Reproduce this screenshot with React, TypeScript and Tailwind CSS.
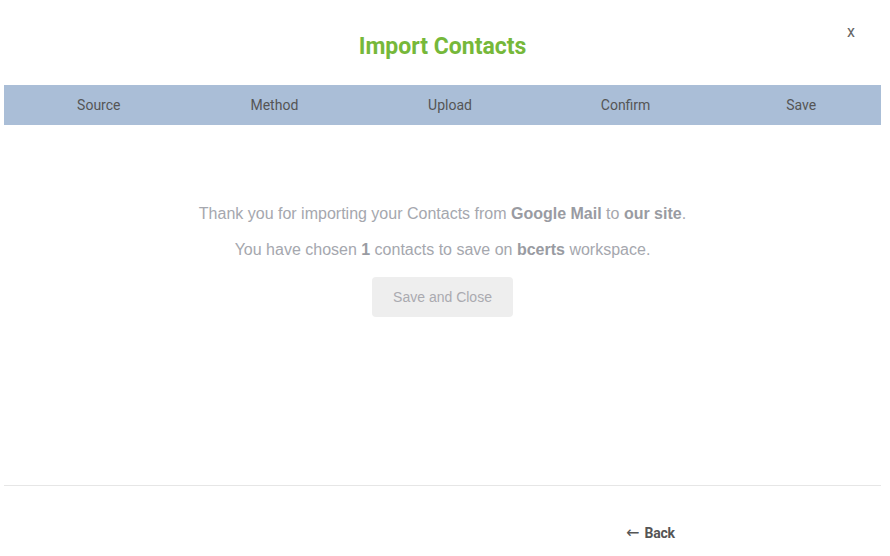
export default function App() {
  return (
    <div className="w-[890px] h-[556px] bg-white overflow-hidden relative">
      {/* Header */}
      <div className="relative ml-[4px] w-[877px] h-[85px] flex items-start justify-center">
        <h1 className="mt-[32px] text-[23px] leading-[30px] font-bold text-[#76b83a] font-['Roboto',sans-serif]">
          Import Contacts
        </h1>
        <button className="absolute right-[26px] top-[22px] text-[16px] leading-5 text-[#666] font-['Roboto',sans-serif]">
          x
        </button>
      </div>

      {/* Steps */}
      <div className="ml-[4px] w-[877px] h-[40px] bg-[#aabed7]">
        <div className="ml-[7px] w-[878px] h-full grid grid-cols-5 items-center text-[14px] text-[#555] font-['Roboto',sans-serif]">
          <div className="text-center">Source</div>
          <div className="text-center">Method</div>
          <div className="text-center">Upload</div>
          <div className="text-center">Confirm</div>
          <div className="text-center">Save</div>
        </div>
      </div>

      {/* Body */}
      <div className="ml-[4px] w-[877px] h-[360px] flex flex-col items-center pt-[79px] font-['Liberation_Sans',Arial,sans-serif] text-[16px] text-[#a5a7ae]">
        <p className="leading-[20px]">
          Thank you for importing your Contacts from <b className="text-[#999ba2]">Google Mail</b> to{" "}
          <b className="text-[#999ba2]">our site</b>.
        </p>
        <p className="leading-[20px] mt-[16px]">
          You have chosen <b className="text-[#999ba2]">1</b> contacts to save on{" "}
          <b className="text-[#999ba2]">bcerts</b> workspace.
        </p>
        <button className="mt-[17px] w-[141px] h-[40px] rounded-[4px] bg-[#eeeeee] text-[14px] text-[#aaaab0]">
          Save and Close
        </button>
      </div>

      {/* Footer */}
      <div className="ml-[4px] w-[877px] border-t border-[#e6e6e6]" />
      <div className="flex pl-[626px] pt-[37px]">
        <button className="flex items-center gap-[5px] text-[14px] leading-5 font-bold text-[#555] font-['Roboto',sans-serif]">
          <span className="text-[16px] font-normal font-['DejaVu_Sans',sans-serif]">←</span>
          <span className="tracking-[-0.2px]">Back</span>
        </button>
      </div>
    </div>
  );
}
